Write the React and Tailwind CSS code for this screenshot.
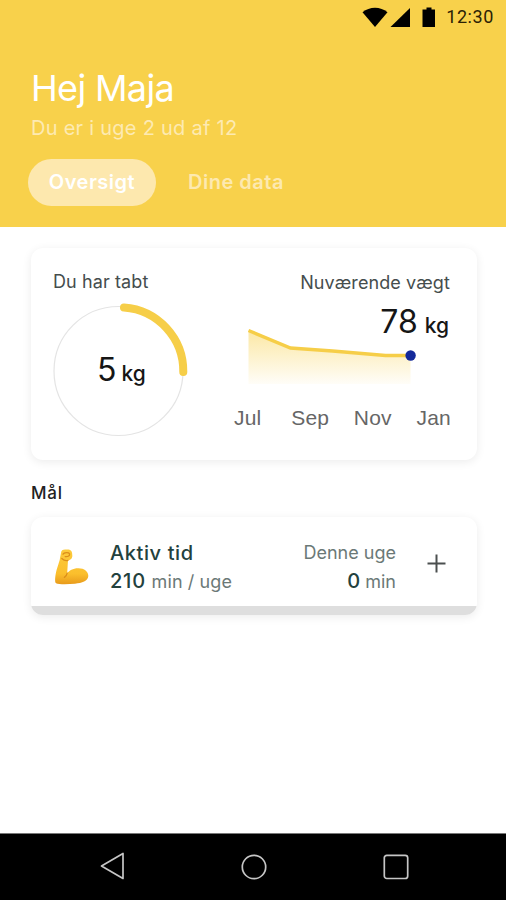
const months = ["Jul", "Sep", "Nov", "Jan"]

function StatusBar() {
    return (
        <div className="h-[34px] flex items-center justify-end pr-3">
            <svg width="76" height="22" viewBox="0 0 76 22" fill="#000">
                {/* wifi */}
                <path d="M0.5 6.3C7.5 0.2 18.5 0.2 25.5 6.3L13 21Z" />
                {/* signal */}
                <path d="M48 2V21H28.5Z" />
                {/* battery */}
                <path d="M64.5 1.5h5V3.5H73V21H60.5V3.5h4Z" />
            </svg>
            <span className="ml-2 font-[Roboto] text-[18px] leading-[34px] tracking-[0.6px] text-[#2b2105]">12:30</span>
        </div>
    )
}

function Header() {
    return (
        <header className="h-[227px] bg-[#f8d14b] text-white">
            <StatusBar />
            <div className="pt-[31px] pl-[31px]">
                <h1 className="text-[36px] leading-[46px] font-normal tracking-[-0.65px]">Hej Maja</h1>
                <p className="text-[20px] leading-7 tracking-[0.26px] font-normal text-[#fdeab2] mt-[3px]">Du er i uge 2 ud af 12</p>
            </div>
            <nav className="mt-[17px] pl-7 flex items-center">
                <button className="w-[128px] h-[47px] pb-px rounded-full bg-[#fde8ae] text-[20px] tracking-[0.5px] font-semibold text-white">Oversigt</button>
                <button className="ml-8 pb-px text-[20px] tracking-[0.5px] font-semibold text-[#fde9b0]">Dine data</button>
            </nav>
        </header>
    )
}

function LossRing() {
    return (
        <div className="w-[140px]">
            <p className="text-[18px] leading-6 tracking-[0.1px] text-[#454d4d]">Du har tabt</p>
            <div className="relative mt-2 -ml-[3px] w-[140px] h-[136px]">
                <svg width="140" height="136" viewBox="0 0 140 136" fill="none">
                    <circle cx="68.5" cy="69" r="64.5" stroke="#e4e4e4" strokeWidth="1.2" />
                    <path d="M74 5.5A64 64 0 0 1 133.3 70" stroke="#f6ce48" strokeWidth="8" strokeLinecap="round" />
                </svg>
                <div className="absolute inset-0 flex items-baseline pl-[47px] pt-[46px] text-[#161616]">
                    <span className="text-[32px] leading-[44px]">5</span>
                    <span className="ml-[5px] text-[21px] font-medium">kg</span>
                </div>
            </div>
        </div>
    )
}

function WeightChart() {
    return (
        <div className="w-[220px] pt-px flex flex-col">
            <p className="pr-px text-right text-[18px] leading-6 tracking-[0.1px] text-[#454d4d]">Nuværende vægt</p>
            <div className="flex items-baseline justify-end pr-[2px] text-[#161616] mt-[5px]">
                <span className="text-[32px] leading-[44px]">78</span>
                <span className="ml-[7px] text-[21px] font-medium">kg</span>
            </div>
            <svg className="-mt-5 ml-[13px]" width="176" height="64" viewBox="0 0 176 64" fill="none">
                <defs>
                    <linearGradient id="fade" x1="0" y1="0" x2="0" y2="1">
                        <stop offset="0" stopColor="#f8d14b" stopOpacity="0.5" />
                        <stop offset="1" stopColor="#f8d14b" stopOpacity="0.04" />
                    </linearGradient>
                </defs>
                <path d="M4.5 7L46.5 24L88.5 27L141.5 31.5H166.5V60H4.5Z" fill="url(#fade)" />
                <path d="M4.5 6.5L46.5 24L88.5 27L141.5 31.5H166.5" stroke="#f6ce48" strokeWidth="3.4" />
                <circle cx="166.6" cy="31.5" r="5.2" fill="#14299a" />
            </svg>
            <div className="flex justify-between mt-[18px] pl-[3px] font-['Liberation_Sans',sans-serif] text-[21px] leading-6 tracking-[0.2px] text-[#666]">
                {months.map((m) => (
                    <span key={m} className={m === "Sep" ? "ml-[5px]" : ""}>{m}</span>
                ))}
            </div>
        </div>
    )
}

function GoalCard() {
    return (
        <div className="h-[98px] rounded-[12px] overflow-hidden bg-white shadow-[0_2px_10px_rgba(0,0,0,0.08)] flex flex-col">
            <div className="flex-1 pt-[11px] pl-[23px] pr-[31px] flex items-center">
                {/* flexed arm */}
                <svg width="36" height="38" viewBox="0 0 36 38">
                    <defs>
                        <linearGradient id="skin" x1="0" y1="0" x2="0" y2="1">
                            <stop offset="0" stopColor="#fccb3c" />
                            <stop offset="0.7" stopColor="#fbbf2d" />
                            <stop offset="1" stopColor="#e89b1c" />
                        </linearGradient>
                    </defs>
                    <path d="M7 5C7 2 9.5 1 12.5 1.5C16 1 18.5 3 18.2 6.5C19 10 16.5 12.5 14 12.3L13.2 25.2C15 22.8 19 20.2 24 20.2C30 20 34.5 23.5 34.3 28C34 33 28 35 21 35.7C14 36.2 5 36.5 2 35.2C0.8 34.5 1 30 1.7 26C2.8 20 6 12.5 6 10Z" fill="url(#skin)" />
                    <path d="M9 6.2C10 4.5 14.5 4 15.6 5.8C16 8.4 13.2 8.8 11.2 8.6M7.8 10.5C10 12.6 12.5 12.8 14 12.3M13.2 25.2C12.8 27.2 11.7 28.6 10.4 29.4" stroke="#dc8e1a" strokeWidth="1.3" fill="none" strokeLinecap="round" />
                </svg>
                <div className="ml-5 text-[20px] leading-7 text-[#23413d]">
                    <p className="font-medium tracking-[0.6px]">Aktiv tid</p>
                    <p>
                        <span className="font-medium tracking-[0.8px]">210</span>{" "}
                        <span className="text-[18px] tracking-[0.1px] text-[#6b7977]">min / uge</span>
                    </p>
                </div>
                <div className="ml-auto pt-px text-right text-[18px] leading-7 text-[#6b7977]">
                    <p>Denne uge</p>
                    <p>
                        <span className="text-[20px] font-medium text-[#23413d]">0</span> min
                    </p>
                </div>
                <svg className="ml-[31px] -mt-[7px]" width="19" height="19" viewBox="0 0 19 19" stroke="#4b4f4f" strokeWidth="2">
                    <path d="M9.5 0.5V18.5M0.5 9.5H18.5" />
                </svg>
            </div>
            {/* weekly progress, empty */}
            <div className="h-[9px] bg-[#dedede]" />
        </div>
    )
}

function NavBar() {
    return (
        <footer className="h-[67px] bg-black border-t border-[#777] flex justify-between pl-[100px] pr-[97px] pt-[18px]">
            <svg width="25" height="29" viewBox="0 0 25 29" fill="none" stroke="#c6c6c6" strokeWidth="1.7" strokeLinejoin="round">
                <path d="M23 1.5V26.5L1.5 14Z" />
            </svg>
            <svg width="26" height="29" viewBox="0 0 26 29" fill="none" stroke="#c6c6c6" strokeWidth="1.7">
                <circle cx="13" cy="15" r="11.7" />
            </svg>
            <svg width="26" height="29" viewBox="0 0 26 29" fill="none" stroke="#c6c6c6" strokeWidth="1.7">
                <rect x="1.3" y="3.3" width="23.4" height="23.2" rx="2.5" />
            </svg>
        </footer>
    )
}

export default function App() {
    return (
        <div className="w-[506px] h-[900px] overflow-hidden flex flex-col bg-white font-[Inter,sans-serif]">
            <Header />
            <main className="flex-1 px-[31px] pr-[29px] pt-[21px]">
                <section className="h-[212px] rounded-[12px] bg-white shadow-[0_2px_10px_rgba(0,0,0,0.08)] flex justify-between pt-[22px] pl-[22px] pr-[26px]">
                    <LossRing />
                    <WeightChart />
                </section>
                <h2 className="mt-[21px] text-[17px] leading-6 font-medium tracking-[0.8px] text-[#222]">Mål</h2>
                <div className="mt-3">
                    <GoalCard />
                </div>
            </main>
            <NavBar />
        </div>
    )
}
